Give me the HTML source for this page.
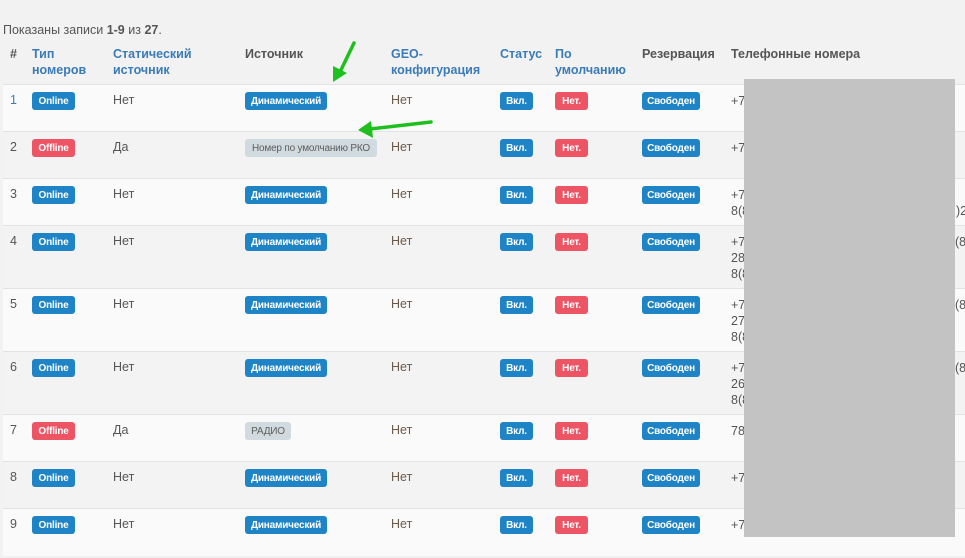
<!DOCTYPE html><html><head><meta charset="utf-8"><style>
body{margin:0;width:965px;height:558px;background:#f2f2f2;font-family:"Liberation Sans","DejaVu Sans",sans-serif;font-size:12.5px;color:#555;position:relative;overflow:hidden}
.a{position:absolute;white-space:nowrap}
.h{font-weight:bold;font-size:12.5px;line-height:16px}
.bl{color:#3a7bb8}
.row{position:absolute;left:3px;width:962px;border-top:1px solid #e3e3e3}
.b{position:absolute;height:18px;border-radius:3px;color:#fff;font-weight:bold;font-size:10px;letter-spacing:-0.2px;display:flex;align-items:center;justify-content:center;white-space:nowrap;padding-top:1px;box-sizing:border-box}
.on{background:#1f84c6}.off{background:#ed5565}.g{background:#d1dade;color:#5e5e5e;font-weight:normal}
</style></head><body>
<div class="a" style="left:3px;top:23px;font-size:12.5px">Показаны записи <b>1-9</b> из <b>27</b>.</div>
<div class="a h" style="left:10px;top:46px">#</div>
<div class="a h bl" style="left:32px;top:46px">Тип<br>номеров</div>
<div class="a h bl" style="left:113px;top:46px">Статический<br>источник</div>
<div class="a h" style="left:245px;top:46px">Источник</div>
<div class="a h bl" style="left:391px;top:46px">GEO-<br>конфигурация</div>
<div class="a h bl" style="left:500px;top:46px">Статус</div>
<div class="a h bl" style="left:555px;top:46px">По<br>умолчанию</div>
<div class="a h" style="left:642px;top:46px">Резервация</div>
<div class="a h" style="left:731px;top:46px">Телефонные номера</div>
<div id="rows"></div>
<script>
var R=[[84,47,1,'Online','Нет','Динамический',0,['+7']],[131,47,2,'Offline','Да','Номер по умолчанию РКО',1,['+7']],[178,47,3,'Online','Нет','Динамический',0,['+7','8(8']],[225,63,4,'Online','Нет','Динамический',0,['+7','28','8(8']],[288,63,5,'Online','Нет','Динамический',0,['+7','27','8(8']],[351,63,6,'Online','Нет','Динамический',0,['+7','26','8(8']],[414,47,7,'Offline','Да','РАДИО',1,['78']],[461,47,8,'Online','Нет','Динамический',0,['+7']],[508,47,9,'Online','Нет','Динамический',0,['+7']]];
var h='';R.forEach(function(r,i){var t=r[0];h+='<div class="row" style="top:'+t+'px;height:'+r[1]+'px;background:'+(i%2?'#f3f3f3':'#fafafa')+'"></div>';
var y=t+9;h+='<div class="a" style="left:10px;top:'+y+'px;color:'+(i==0?'#3a7bb8':'#555')+'">'+r[2]+'</div>';
h+='<div class="b '+(r[3]=='Online'?'on':'off')+'" style="left:32px;top:'+(t+8)+'px;width:43px">'+r[3]+'</div>';
h+='<div class="a" style="left:113px;top:'+y+'px">'+r[4]+'</div>';
var w=r[5]=='Динамический'?82:(r[5]=='РАДИО'?46:132);
h+='<div class="b '+(r[6]?'g':'on')+'" style="left:245px;top:'+(t+8)+'px;width:'+w+'px">'+r[5]+'</div>';
h+='<div class="a" style="left:391px;top:'+y+'px;color:#6b5a4a">Нет</div>';
h+='<div class="b on" style="left:500px;top:'+(t+8)+'px;width:33px">Вкл.</div>';
h+='<div class="b off" style="left:555px;top:'+(t+8)+'px;width:33px">Нет.</div>';
h+='<div class="b on" style="left:642px;top:'+(t+8)+'px;width:58px">Свободен</div>';
h+='<div class="a" style="left:731px;top:'+y+'px;line-height:16px">'+r[7].join('<br>')+'</div>';
if(i==2)h+='<div class="a" style="left:956px;top:'+(y+16)+'px;line-height:16px">)2</div>';
if(i>=3&&i<=5)h+='<div class="a" style="left:955px;top:'+y+'px;line-height:16px">(8</div>';
});
document.getElementById('rows').innerHTML=h;
</script>
<div class="a" style="left:744px;top:79px;width:211px;height:458px;background:#c3c3c3"></div>
<svg class="a" style="left:0;top:0" width="965" height="558"><g stroke="#1fbf1f" stroke-width="3.5" fill="none" stroke-linecap="round"><path d="M354 43 L340 72"/><path d="M431 122 L370 129"/></g><g fill="#1fbf1f"><path d="M333 82 L333 66 L347 73 Z"/><path d="M358 130 L371 121 L373 138 Z"/></g></svg>
</body></html>
